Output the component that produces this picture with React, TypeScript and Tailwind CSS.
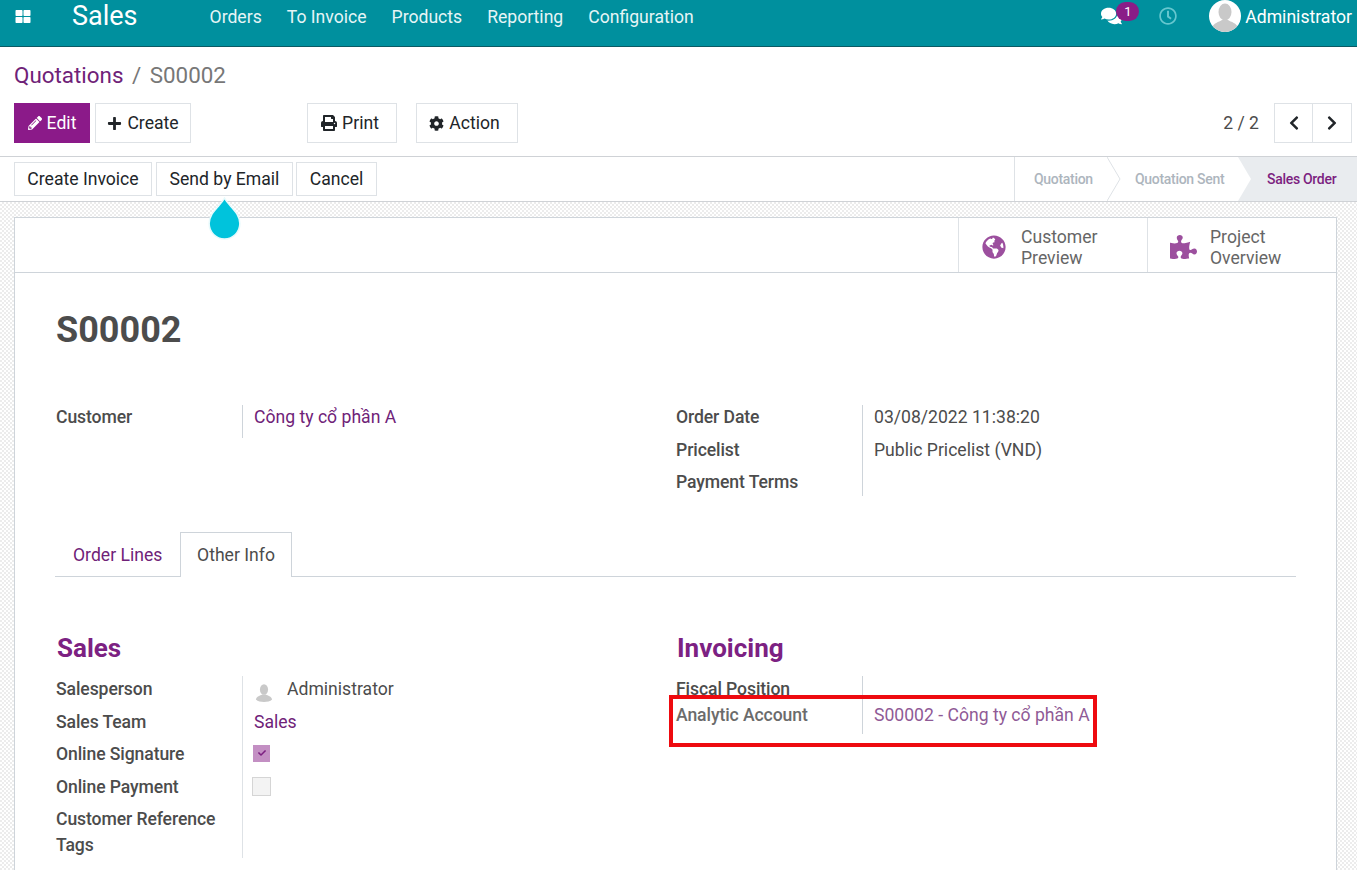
import React from "react";
import {
  FaThLarge,
  FaPencilAlt,
  FaPlus,
  FaPrint,
  FaCog,
  FaChevronLeft,
  FaChevronRight,
  FaComments,
  FaRegClock,
  FaGlobeAmericas,
  FaPuzzlePiece,
  FaCheck,
} from "react-icons/fa";

function Silhouette({ className }: { className?: string }) {
  return (
    <svg viewBox="0 0 32 32" className={className}>
      <ellipse cx="16" cy="12" rx="6.5" ry="8.5" fill="#c9c9c9" />
      <path d="M3 28c1-5 7-6 10-8h6c3 2 9 3 10 8-3 3-8 4-13 4s-10-1-13-4z" fill="#c9c9c9" />
    </svg>
  );
}

function Btn({ children, className = "" }: { children: React.ReactNode; className?: string }) {
  return (
    <div className={"flex items-center justify-center border border-[#dee2e6] bg-white text-[#212529] text-[17.6px] " + className}>
      {children}
    </div>
  );
}

function Label({ children, className = "" }: { children: React.ReactNode; className?: string }) {
  return <div className={"w-[186px] shrink-0 font-medium tracking-[-0.1px] text-[#4c4c4c] text-[17.6px] leading-[21px] " + className}>{children}</div>;
}

export default function App() {
  return (
    <div className="w-[1357px] h-[870px] overflow-hidden relative bg-white font-['Roboto',sans-serif] text-[17.6px] text-[#4c4c4c]">
      {/* top bar */}
      <header className="h-[47px] bg-[#00909e] border-b border-[#0b5a64] text-white">
        <div className="h-[32px] flex items-center">
          <FaThLarge className="ml-[15px] w-[16px] h-[15px]" />
          <span className="ml-[41px] text-[27px]">Sales</span>
          <nav className="ml-[72px] pt-[2px] flex gap-[25px] text-[#e6f5f6]">
            <span>Orders</span>
            <span>To Invoice</span>
            <span>Products</span>
            <span>Reporting</span>
            <span>Configuration</span>
          </nav>
          <div className="ml-auto flex items-center pr-[5px]">
            <div className="relative w-[38px] h-[22px]">
              <FaComments className="absolute left-0 top-[1px] w-[21px] h-[20px]" />
              <span className="absolute left-[15px] -top-[3px] w-[23px] h-[19px] rounded-full bg-[#8a1d87] text-[13px] leading-[19px] text-center">1</span>
            </div>
            <FaRegClock className="ml-[20px] w-[18px] h-[18px] text-[#66c7cf]" />
            <div className="ml-[32px] w-[32px] h-[32px] rounded-full bg-white overflow-hidden">
              <Silhouette className="w-[32px] h-[32px]" />
            </div>
            <span className="ml-[4px] pt-[2px]">Administrator</span>
          </div>
        </div>
      </header>

      {/* control panel */}
      <div className="h-[109px] pl-[14px] pr-[5px]">
        <div className="pt-[15px] h-[56px] text-[22.4px] leading-[26px]">
          <span className="text-[#6f2278]">Quotations</span>
          <span className="text-[#777] mx-[8.5px]">/</span>
          <span className="text-[#777]">S00002</span>
        </div>
        <div className="flex items-center">
          <div className="w-[76px] h-[40px] flex items-center justify-center gap-[5px] bg-[#8b1a89] text-white">
            <FaPencilAlt className="w-[14px] h-[14px]" />
            <span>Edit</span>
          </div>
          <Btn className="ml-[5px] w-[96px] h-[40px] gap-[5px]">
            <FaPlus className="w-[15px] h-[15px]" />
            Create
          </Btn>
          <Btn className="ml-[116px] w-[90px] h-[40px] gap-[5px] pr-[4px]">
            <FaPrint className="w-[16px] h-[16px]" />
            Print
          </Btn>
          <Btn className="ml-[19px] w-[102px] h-[40px] gap-[5px] pr-[5px]">
            <FaCog className="w-[15px] h-[15px]" />
            Action
          </Btn>
          <span className="ml-auto text-[#4c4c4c]">2 / 2</span>
          <Btn className="ml-[15px] w-[39px] h-[40px]">
            <FaChevronLeft className="w-[16px] h-[16px]" />
          </Btn>
          <Btn className="-ml-px w-[40px] h-[40px]">
            <FaChevronRight className="w-[16px] h-[16px]" />
          </Btn>
        </div>
      </div>

      {/* status row */}
      <div className="h-[46px] border-y border-[#cfd2d6] flex items-center pl-[14px]">
        <Btn className="w-[138px] h-[34px]">Create Invoice</Btn>
        <Btn className="ml-[4px] w-[137px] h-[34px]">Send by Email</Btn>
        <Btn className="ml-[3px] w-[81px] h-[34px]">Cancel</Btn>
        <div className="ml-auto h-full flex text-[14px] tracking-[-0.3px] font-medium text-[#adb5bd]">
          <div className="relative w-[93px] border-l border-[#dee2e6] flex items-center pl-[19px]">
            Quotation
            <svg viewBox="0 0 14 44" className="absolute left-[92px] top-0 w-[14px] h-[44px] z-10">
              <path d="M0 0 L13 22 L0 44" fill="none" stroke="#dee2e6" />
            </svg>
          </div>
          <div className="w-[131px] flex items-center pl-[28px]">Quotation Sent</div>
          <div className="relative w-[119px] bg-[#e9ecef] flex items-center pl-[29px] text-[#7c1f80]">
            <svg viewBox="0 0 14 44" className="absolute left-0 top-0 w-[14px] h-[44px]">
              <path d="M0 0 L13 22 L0 44 Z" fill="#ffffff" />
            </svg>
            Sales Order
          </div>
        </div>
      </div>

      {/* form view */}
      <div className="h-[669px] pl-[14px] pr-[20px] pt-[15px] bg-[repeating-conic-gradient(#ececec_0%_25%,#ffffff_0%_50%)] bg-[length:4px_4px]">
        <div className="w-[1323px] h-[700px] bg-white border border-[#ced4da]">
          <div className="h-[55px] border-b border-[#ced4da] flex justify-end">
            <div className="w-[189px] border-l border-[#dee2e6] flex items-center pl-[23px] gap-[15px] text-[#666] leading-[21px]">
              <FaGlobeAmericas className="mt-[4px] w-[24px] h-[24px] text-[#9c4f9e]" />
              <div className="mt-[6px]">Customer<br />Preview</div>
            </div>
            <div className="w-[189px] border-l border-[#dee2e6] flex items-center pl-[22px] gap-[13px] text-[#666] leading-[21px]">
              <FaPuzzlePiece className="mt-[4px] w-[27px] h-[26px] text-[#9c4f9e]" />
              <div className="mt-[6px]">Project<br />Overview</div>
            </div>
          </div>

          <div className="pl-[41px] pr-[40px]">
            <h1 className="pt-[34px] h-[132px] text-[36px] leading-[47px] font-bold text-[#4c4c4c]">S00002</h1>

            <div className="flex h-[127px]">
              <div className="w-[620px] flex items-start">
                <Label className="pt-[2px]">Customer</Label>
                <div className="h-[33px] border-l border-[#ced4da] pl-[11px] pt-[2px] text-[#6f2278] leading-[21px]">Công ty cổ phần A</div>
              </div>
              <div className="flex items-stretch h-[91px]">
                <div className="w-[186px] font-medium tracking-[-0.1px] text-[#4c4c4c] leading-[21px] pt-[2px] flex flex-col gap-[11.5px]">
                  <span>Order Date</span>
                  <span>Pricelist</span>
                  <span>Payment Terms</span>
                </div>
                <div className="border-l border-[#ced4da] pl-[11px] pt-[2px] leading-[21px] flex flex-col gap-[11.5px]">
                  <span>03/08/2022 11:38:20</span>
                  <span>Public Pricelist (VND)</span>
                </div>
              </div>
            </div>

            {/* tabs */}
            <div className="h-[45px] border-b border-[#ced4da] flex items-end -ml-px">
              <div className="w-[125px] h-[44px] flex items-center pl-[18px] pt-[3px] text-[#6f2278]">Order Lines</div>
              <div className="w-[112px] h-[45px] -mb-px bg-white border border-b-0 border-[#ced4da] flex items-center justify-center">Other Info</div>
            </div>

            <div className="flex pt-[55px]">
              <div className="w-[620px]">
                <h2 className="pl-px h-[44px] text-[26px] leading-[32px] font-bold text-[#7c2182]">Sales</h2>
                <div className="flex">
                  <div className="w-[186px] font-medium tracking-[-0.1px] leading-[21px] pt-[3px] flex flex-col gap-[11.5px]">
                    <span>Salesperson</span>
                    <span>Sales Team</span>
                    <span>Online Signature</span>
                    <span>Online Payment</span>
                    <div className="leading-[26px] -mt-[3px]">Customer Reference<br />Tags</div>
                  </div>
                  <div className="h-[182px] border-l border-[#dee2e6] pl-[11px] pt-[3px] leading-[21px]">
                    <div className="h-[21px] flex items-center">
                      <Silhouette className="w-[20px] h-[20px] mt-[4px]" />
                      <span className="ml-[13px]">Administrator</span>
                    </div>
                    <div className="mt-[11.5px] text-[#6f2278]">Sales</div>
                    <div className="mt-[12px] -ml-px w-[17px] h-[17px] bg-[#c38fc3] flex items-center justify-center">
                      <FaCheck className="w-[8px] h-[8px] text-[#7c1f80]" />
                    </div>
                    <div className="mt-[15px] -ml-[2px] w-[19px] h-[19px] bg-[#f3f3f3] border border-[#d5d5d5]" />
                  </div>
                </div>
              </div>

              <div>
                <h2 className="pl-px h-[44px] text-[26px] leading-[32px] font-bold text-[#7c2182]">Invoicing</h2>
                <div className="flex h-[58px]">
                  <div className="w-[186px] font-medium tracking-[-0.1px] text-[#4c4c4c] leading-[21px] pt-[3px] flex flex-col gap-[5px]">
                    <span>Fiscal Position</span>
                    <span className="text-[#6b6b6b]">Analytic Account</span>
                  </div>
                  <div className="border-l border-[#ced4da] pl-[11px] pt-[29px] leading-[21px] text-[#8f5a96]">S00002 - Công ty cổ phần A</div>
                </div>
              </div>
            </div>
          </div>
        </div>
      </div>

      {/* annotations drawn on top of the screenshot */}
      <div className="absolute left-[669px] top-[695px] w-[428px] h-[52px] border-[4px] border-[#ee0a0f]" />
      <svg viewBox="0 0 34 42" className="absolute left-[207px] top-[197px] w-[35px] h-[43px]">
        <path d="M17 1 C21 9 32 15 32 26 A15 15 0 0 1 2 26 C2 15 13 9 17 1 Z" fill="#00c3dc" stroke="#e8fafc" strokeWidth="1.5" />
      </svg>
    </div>
  );
}
